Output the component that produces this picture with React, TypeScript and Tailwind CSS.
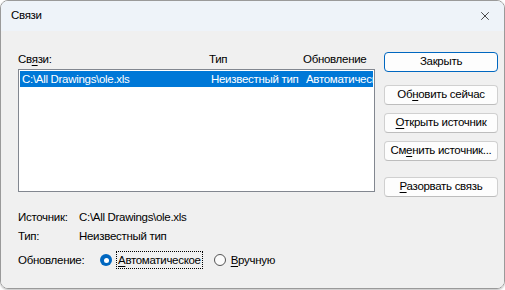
import React from 'react';
import { X } from 'lucide-react';

const U: React.FC<{ children: React.ReactNode }> = ({ children }) => (
  <span className="underline underline-offset-2">{children}</span>
);

const Btn: React.FC<{ children: React.ReactNode; primary?: boolean }> = ({ children, primary }) => (
  <button
    className={
      primary
        ? 'h-[20px] w-[114px] whitespace-nowrap rounded-[4px] border border-[#0067c0] bg-[#fdfdfd] text-[11.5px] tracking-[-0.3px] leading-none text-black'
        : 'h-[20px] w-[114px] whitespace-nowrap rounded-[4px] border border-[#d0d0d0] border-b-[#bdbdbd] bg-[#fdfdfd] text-[11.5px] tracking-[-0.3px] leading-none text-black'
    }
  >
    {children}
  </button>
);

const App: React.FC = () => {
  return (
    <div className="w-[505px] h-[290px] bg-white" style={{ fontFamily: '"Liberation Sans", Arial, sans-serif' }}>
      <div className="w-[505px] h-[289px] flex flex-col rounded-[8px] border border-[#9a9a9a] overflow-hidden shadow-[0_1px_2px_rgba(0,0,0,0.25)]">
        <div className="h-[30px] flex items-center justify-between bg-[#eef3f9] pl-[10px] pr-[10px]">
          <span className="text-[11.5px] tracking-[-0.3px] text-black">Связи</span>
          <X size={14} strokeWidth={1.2} className="text-black mr-[2px]" />
        </div>

        <div className="flex-1 bg-[#f0f0f0] pl-[17px] pr-[7px] text-[11.5px] tracking-[-0.3px] text-black leading-[16px]">
          <div className="flex gap-[9px] pt-[20px]">
            <div className="w-[357px] flex flex-col">
              <div className="flex h-[18px] items-start relative">
                <span>Св<U>я</U>зи:</span>
                <span className="absolute left-[191px]">Тип</span>
                <span className="absolute left-[285px]">Обновление</span>
              </div>
              <div className="h-[123px] border border-[#828790] bg-white p-[1px]">
                <div className="flex h-[16px] items-center bg-[#0078d7] text-white whitespace-nowrap overflow-hidden">
                  <span className="w-[191px] pl-[2px] shrink-0">C:\All Drawings\ole.xls</span>
                  <span className="w-[95px] shrink-0">Неизвестный тип</span>
                  <span>Автоматическое</span>
                </div>
              </div>
            </div>

            <div className="flex flex-col pt-[1px]">
              <Btn primary>Закрыть</Btn>
              <div className="mt-[13px] flex flex-col gap-[8px]">
                <Btn>Об<U>н</U>овить сейчас</Btn>
                <Btn><U>О</U>ткрыть источник</Btn>
                <Btn>См<U>е</U>нить источник...</Btn>
              </div>
              <div className="mt-[16px]">
                <Btn><U>Р</U>азорвать связь</Btn>
              </div>
            </div>
          </div>

          <div className="mt-[10px] flex flex-col">
            <div className="flex h-[19px] items-center">
              <span className="w-[61px]">Источник:</span>
              <span>C:\All Drawings\ole.xls</span>
            </div>
            <div className="flex h-[19px] items-center">
              <span className="w-[61px]">Тип:</span>
              <span>Неизвестный тип</span>
            </div>
            <div className="flex h-[24px] items-center mt-[3px]">
              <span className="w-[82px]">Обновление:</span>
              <span className="w-[12px] h-[12px] rounded-full bg-[#0067c0] flex items-center justify-center">
                <span className="w-[5px] h-[5px] rounded-full bg-white" />
              </span>
              <span className="ml-[4px] px-[1px] border border-dotted border-black leading-[16px]">
                <U>А</U>втоматическое
              </span>
              <span className="ml-[11px] w-[12px] h-[12px] rounded-full border border-[#555] bg-[#fbfbfb]" />
              <span className="ml-[5px]"><U>В</U>ручную</span>
            </div>
          </div>
        </div>
      </div>
    </div>
  );
};

export default App;
